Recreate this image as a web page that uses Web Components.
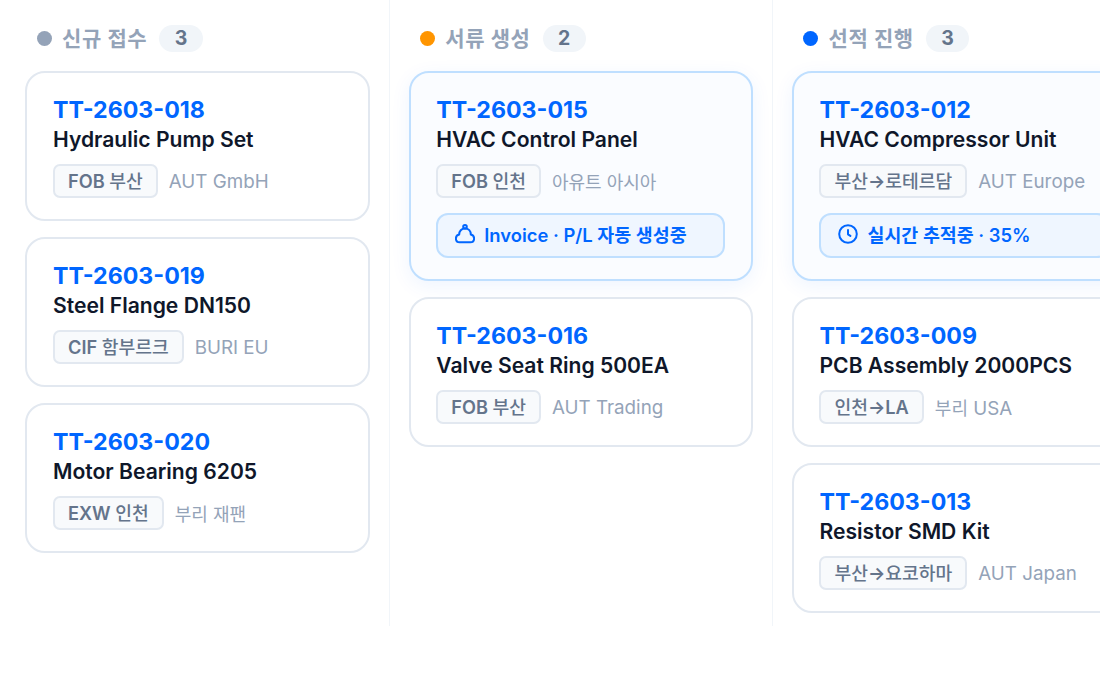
<!DOCTYPE html>
<html>
<head>
<meta charset="utf-8">
<style>
  html, body { margin: 0; padding: 0; background: #fff; overflow: hidden; }
  body { font-family: Inter, "Noto Sans CJK KR", sans-serif; }
</style>
</head>
<body>
<kanban-board>
  <kanban-column title="신규 접수" count="3" dot="#94a3b8">
    <order-card order="TT-2603-018" name="Hydraulic Pump Set" tag="FOB 부산" company="AUT GmbH"></order-card>
    <order-card order="TT-2603-019" name="Steel Flange DN150" tag="CIF 함부르크" company="BURI EU"></order-card>
    <order-card order="TT-2603-020" name="Motor Bearing 6205" tag="EXW 인천" company="부리 재팬"></order-card>
  </kanban-column>
  <kanban-column title="서류 생성" count="2" dot="#ff9500">
    <order-card active order="TT-2603-015" name="HVAC Control Panel" tag="FOB 인천" company="아유트 아시아" status="Invoice · P/L 자동 생성중" icon="bell"></order-card>
    <order-card order="TT-2603-016" name="Valve Seat Ring 500EA" tag="FOB 부산" company="AUT Trading"></order-card>
  </kanban-column>
  <kanban-column title="선적 진행" count="3" dot="#0066ff">
    <order-card active order="TT-2603-012" name="HVAC Compressor Unit" tag="부산→로테르담" company="AUT Europe" status="실시간 추적중 · 35%" icon="clock"></order-card>
    <order-card order="TT-2603-009" name="PCB Assembly 2000PCS" tag="인천→LA" company="부리 USA"></order-card>
    <order-card order="TT-2603-013" name="Resistor SMD Kit" tag="부산→요코하마" company="AUT Japan"></order-card>
  </kanban-column>
</kanban-board>

<script>
const ICONS = {
  bell: `<circle cx="10" cy="2.800" r="1.800"/><path d="M10 4.600C6.400 4.600 4.200 7.200 4.200 10.400 2 10.900.9 12.500.9 14.400c0 2.400 1.700 3.800 3.700 3.800h10.800c2 0 3.700-1.400 3.700-3.800 0-1.900-1.100-3.500-3.300-4 0-3.200-2.200-5.800-5.800-5.800z"/>`,
  clock: `<circle cx="10" cy="10" r="8.800"/><path d="M10 6v4.300l2.400 1.600"/>`,
};

// hangul runs get their own span, they are sized apart from the latin text
const wrapHangul = (text) => text.replace(/[가-힣]+(?: [가-힣]+)*/g, '<span class="ko">$&</span>');

class KanbanBoard extends HTMLElement {
  constructor() {
    super();
    this.attachShadow({ mode: "open" });
    this.shadowRoot.innerHTML = `
      <style>
        :host { display: flex; width: 1100px; height: 626px; padding-left: 6.300px; box-sizing: border-box; overflow: hidden; }
      </style>
      <slot></slot>
    `;
  }
}

class KanbanColumn extends HTMLElement {
  constructor() {
    super();
    this.attachShadow({ mode: "open" });
  }

  connectedCallback() {
    this.shadowRoot.innerHTML = `
      <style>
        :host { display: block; flex: 0 0 383.250px; box-sizing: border-box; padding: 25px 19px 0; border-right: 1px solid #f1f5f9; }
        :host(:last-child) { border-right: none; }
        .head { display: flex; align-items: center; height: 27px; margin: 0 0 19px 11.700px; }
        .dot { width: 15px; height: 15px; border-radius: 50%; margin-right: 10px; }
        .title { font-size: 21px; line-height: 25px; padding-bottom: 1px; font-weight: 700; letter-spacing: 0.600px; color: #94a3b8; margin-right: 12px; }
        .count { height: 27px; padding: 0 15.500px; border-radius: 14px; background: #f1f5f9; color: #64748b; font-size: 19.500px; font-weight: 700; line-height: 27px; }
        .cards { display: flex; flex-direction: column; gap: 16px; }
      </style>
      <div class="head">
        <span class="dot" style="background:${this.getAttribute("dot")}"></span>
        <span class="title">${this.getAttribute("title")}</span>
        <span class="count">${this.getAttribute("count")}</span>
      </div>
      <div class="cards"><slot></slot></div>
    `;
  }
}

class OrderCard extends HTMLElement {
  constructor() {
    super();
    this.attachShadow({ mode: "open" });
  }

  connectedCallback() {
    const status = this.getAttribute("status");
    const icon = this.getAttribute("icon");
    this.shadowRoot.innerHTML = `
      <style>
        :host { display: block; box-sizing: border-box; padding: 23px 25.700px 21px; background: #fff; border: 2px solid #e2e8f0; border-radius: 20px; }
        :host([active]) { background: #fafcff; border-color: #bfdfff; box-shadow: 0 5px 20px rgba(0, 102, 255, 0.07); }
        .id { font-size: 23.200px; line-height: 29px; font-weight: 700; color: #0066ff; }
        .name { font-size: 21.100px; line-height: 24px; margin-top: 3px; font-weight: 600; color: #0f172a; }
        .meta { display: flex; align-items: center; margin-top: 12px; }
        .tag { box-sizing: border-box; height: 34px; line-height: 30px; padding: 0 13px; border: 2px solid #e2e8f0; border-radius: 7px; background: #f8fafc; color: #64748b; font-size: 18.200px; font-weight: 600; }
        .tag .ko { font-weight: 500; }
        .company { margin-left: 11px; font-size: 18.800px; color: #94a3b8; }
        .company .ko { font-size: 18px; }
        .status { box-sizing: border-box; display: flex; align-items: center; height: 45px; margin-top: 15px; padding: 0 17px 4px; border: 2px solid #bfdfff; border-radius: 12px; background: #eff6ff; color: #0066ff; font-size: 18.400px; font-weight: 600; white-space: nowrap; }
        .status svg { width: 20px; height: 20px; margin-right: 9px; fill: none; stroke: currentColor; stroke-width: 2; stroke-linecap: round; stroke-linejoin: round; flex: none; }
      </style>
      <div class="id">${this.getAttribute("order")}</div>
      <div class="name">${this.getAttribute("name")}</div>
      <div class="meta">
        <span class="tag">${wrapHangul(this.getAttribute("tag"))}</span>
        <span class="company">${wrapHangul(this.getAttribute("company"))}</span>
      </div>
      ${status ? `<div class="status"><svg viewBox="0 0 20 20">${ICONS[icon]}</svg>${status}</div>` : ""}
    `;
  }
}

customElements.define("kanban-board", KanbanBoard);
customElements.define("kanban-column", KanbanColumn);
customElements.define("order-card", OrderCard);
</script>
</body>
</html>
